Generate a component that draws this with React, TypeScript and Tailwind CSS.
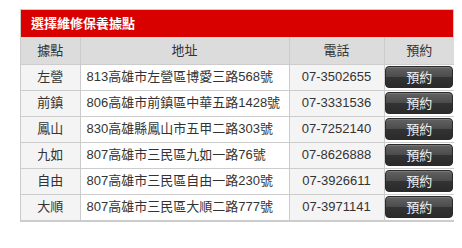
import React from "react";

const rows = [
  ["左營", "813高雄市左營區博愛三路568號", "07-3502655"],
  ["前鎮", "806高雄市前鎮區中華五路1428號", "07-3331536"],
  ["鳳山", "830高雄縣鳳山市五甲二路303號", "07-7252140"],
  ["九如", "807高雄市三民區九如一路76號", "07-8626888"],
  ["自由", "807高雄市三民區自由一路230號", "07-3926611"],
  ["大順", "807高雄市三民區大順二路777號", "07-3971141"],
];

export default function App() {
  return (
    <div
      className="w-[462px] h-[248px] bg-white pt-[9px] pl-[20px]"
      style={{ fontFamily: '"Liberation Sans", Arial, "Noto Sans CJK TC", sans-serif' }}
    >
      <div className="w-[434px] border border-[#cccccc]">
        <div className="h-[27px] bg-[#d90000] flex items-center pl-[10px] text-white text-[13px] font-bold">
          選擇維修保養據點
        </div>
        <table className="w-full border-collapse text-[13px] text-[#333333] table-fixed">
          <colgroup>
            <col className="w-[59px]" />
            <col className="w-[209px]" />
            <col className="w-[95px]" />
            <col className="w-[70px]" />
          </colgroup>
          <thead>
            <tr className="h-[27px] bg-[#dcdcdc]">
              <th className="font-normal border-r border-b border-[#cccccc] text-center">據點</th>
              <th className="font-normal border-r border-b border-[#cccccc] text-center">地址</th>
              <th className="font-normal border-r border-b border-[#cccccc] text-center">電話</th>
              <th className="font-normal border-b border-[#cccccc] text-center">預約</th>
            </tr>
          </thead>
          <tbody>
            {rows.map((r, i) => (
              <tr key={i} className="h-[26px]">
                <td className="bg-[#f4f4f4] border-r border-b border-[#cccccc] text-center p-0">{r[0]}</td>
                <td className="bg-white border-r border-b border-[#cccccc] pl-[6px] p-0 whitespace-nowrap">{r[1]}</td>
                <td className="bg-[#f4f4f4] border-r border-b border-[#cccccc] text-center p-0">{r[2]}</td>
                <td className="bg-white border-b border-[#cccccc] p-0">
                  <div className="flex justify-center">
                    <button className="w-[68px] h-[22px] rounded-[4px] border border-[#2a2a2a] text-[#f0f0f0] text-[13px] leading-none bg-[linear-gradient(#626262_0%,#4c4c4c_48%,#333333_52%,#2a2a2a_100%)] shadow-[inset_0_1px_0_#7a7a7a]">
                      預約
                    </button>
                  </div>
                </td>
              </tr>
            ))}
          </tbody>
        </table>
      </div>
    </div>
  );
}
